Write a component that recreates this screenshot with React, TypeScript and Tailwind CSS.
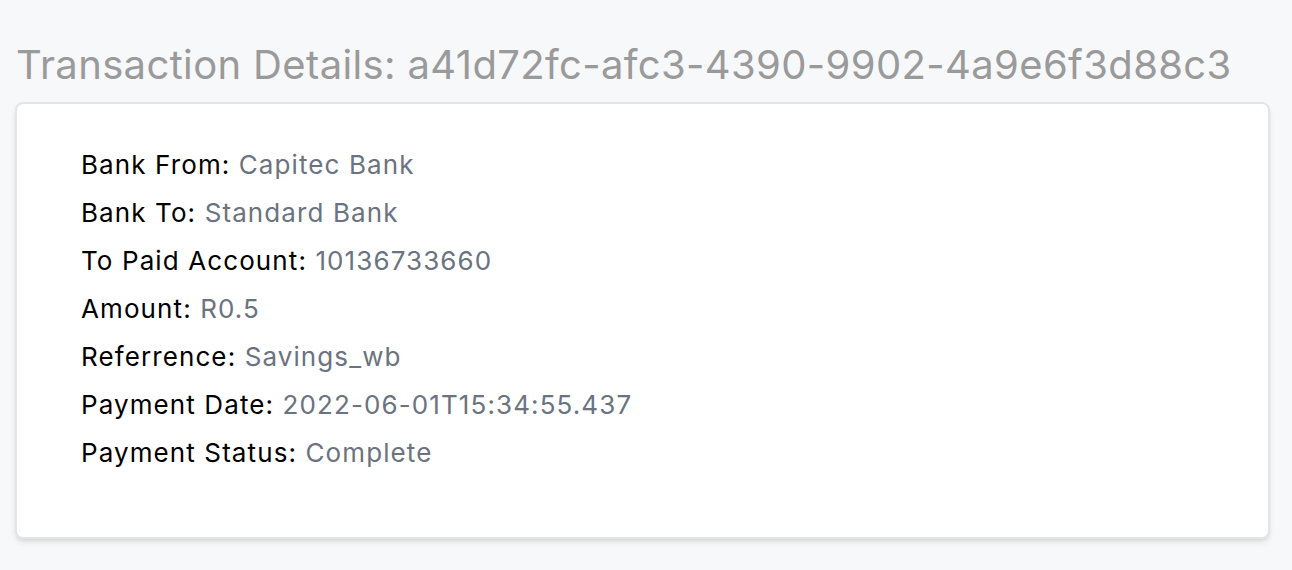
import React from "react";

const rows: [string, string][] = [
  ["Bank From", "Capitec Bank"],
  ["Bank To", "Standard Bank"],
  ["To Paid Account", "10136733660"],
  ["Amount", "R0.5"],
  ["Referrence", "Savings_wb"],
  ["Payment Date", "2022-06-01T15:34:55.437"],
  ["Payment Status", "Complete"],
];

function App() {
  return (
    <div className="min-h-[570px] bg-[#f7f8fa] px-[15px] pt-[41px] font-['Inter',sans-serif]">
      <h2 className="text-[40px] leading-[48px] tracking-[0.36px] text-[#9a9a9a] pl-[1px]">
        Transaction Details: a41d72fc-afc3-4390-9902-4a9e6f3d88c3
      </h2>
      <div className="mt-[13px] w-[1255px] rounded-lg border-2 border-[#e4e5e7] bg-white pl-[64px] pt-[37px] pb-[60px] shadow-md">
        {rows.map(([label, value]) => (
          <p key={label} className="text-[26px] leading-[48px] tracking-[1.1px] text-black">
            {label}: <span className="text-[#6b7280]">{value}</span>
          </p>
        ))}
      </div>
    </div>
  );
}

export default App;
